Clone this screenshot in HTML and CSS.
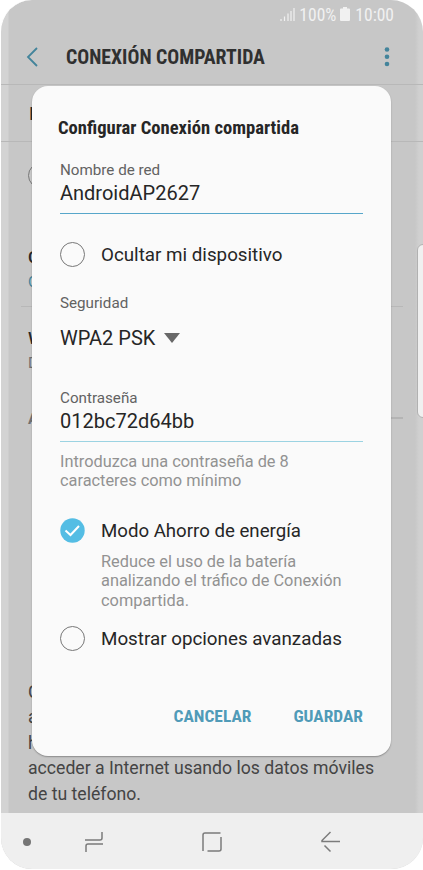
FILE: index.html
```html
<!DOCTYPE html>
<html lang="es">
<head>
<meta charset="utf-8">
<title>Conexión compartida</title>
<link rel="stylesheet" href="styles.css">
</head>
<body>
<div class="phone">
  <header class="status">
    <svg class="signal" width="15" height="15" viewBox="0 0 15 15"><path d="M1 14v-2M4.500 14V9.500M8 14V6.500M11 14V4M14 14V1"/></svg>
    <span class="battery-text">100%</span>
    <svg class="battery" width="10" height="14" viewBox="0 0 10 14"><path d="M3 0h4v1.500h2q1 0 1 1V13q0 1-1 1H1q-1 0-1-1V2.500q0-1 1-1h2z"/></svg>
    <span class="clock">10:00</span>
  </header>
  <div class="appbar">
    <svg class="back" width="12" height="20" viewBox="0 0 12 20"><path d="M11 1L2 10l9 9"/></svg>
    <h1 class="cond">CONEXIÓN COMPARTIDA</h1>
    <svg class="more" width="6" height="20" viewBox="0 0 6 20"><circle cx="3" cy="2.500" r="2.300"/><circle cx="3" cy="9.700" r="2.300"/><circle cx="3" cy="17" r="2.300"/></svg>
  </div>
  <main class="page">
    <div class="row switch">I</div>
    <div class="row device"><i class="radio"></i></div>
    <div class="row item"><b>C</b><span class="link">C</span></div>
    <div class="row item wifi"><b>W</b><span>D</span></div>
    <div class="section"><b>A</b><hr></div>
    <p class="help">C<br>a<br>h<br>acceder a Internet usando los datos móviles<br>de tu teléfono.</p>
  </main>
  <nav class="nav">
    <i class="dot"></i>
    <svg class="recents" width="20" height="22" viewBox="0 0 20 22"><path d="M1 9h15q2 0 2-2V1M19 13H4q-2 0-2 2v6"/></svg>
    <svg class="home" width="20" height="20" viewBox="0 0 20 20"><path d="M1 19V3q0-2 2-2h15.500M19 5v12q0 2-2 2H5.500"/></svg>
    <svg class="return" width="20" height="22" viewBox="0 0 20 22"><path d="M9.500 1L1 9.500v1h18M3.500 14.500l6 6"/></svg>
  </nav>
  <div class="edge-handle"></div>

  <section class="dialog">
    <h2 class="cond">Configurar Conexión compartida</h2>
    <label class="caption">Nombre de red</label>
    <div class="field"><span>AndroidAP2627</span></div>
    <div class="option hide"><i class="radio"></i><span>Ocultar mi dispositivo</span></div>
    <label class="caption security">Seguridad</label>
    <div class="select"><span>WPA2 PSK</span><svg width="16" height="10" viewBox="0 0 16 10"><path d="M0 0h16L8 10z"/></svg></div>
    <label class="caption">Contraseña</label>
    <div class="field password"><span>012bc72d64bb</span></div>
    <p class="hint">Introduzca una contraseña de 8<br>caracteres como mínimo</p>
    <div class="option saver"><svg width="25" height="25" viewBox="0 0 25 25"><circle cx="12.500" cy="12.500" r="12.200"/><path d="M5.500 12.500l5 4.500 8.500-9"/></svg><span>Modo Ahorro de energía</span></div>
    <p class="hint sub">Reduce el uso de la batería<br>analizando el tráfico de Conexión<br>compartida.</p>
    <div class="option advanced"><i class="radio"></i><span>Mostrar opciones avanzadas</span></div>
    <div class="actions cond"><span>CANCELAR</span><span>GUARDAR</span></div>
  </section>
</div>
</body>
</html>
```
FILE: styles.css
```css
* { box-sizing: border-box; }
body { margin: 0; background: #fff; font-family: Roboto, "Liberation Sans", sans-serif; color: #262626; }
h1, h2, p { margin: 0; }
svg { display: block; flex: none; fill: none; }
.cond { font-family: "Roboto Condensed", Roboto, sans-serif; font-stretch: 75%; font-weight: 700; }
.phone { position: relative; width: 423px; height: 870px; display: flex; flex-direction: column; overflow: hidden; border: solid #fff; border-width: 0 0 1px 1px; border-radius: 32px; background: linear-gradient(to right, #d3d3d3 0 7px, #c7c7c7 8px 414px, #d0d0d0 418px 422px); }
.status { height: 29px; display: flex; justify-content: flex-end; align-items: center; padding-right: 29px; color: #f1f1f1; font-size: 17.500px; line-height: 28px; font-stretch: 75%; }
.signal path { stroke: #f1f1f1; stroke-width: 1.2; }
.battery { margin: 0 5px 1px 4px; }
.battery path { fill: #f1f1f1; }
.battery-text { margin-left: 4px; }
.appbar { height: 56px; display: flex; align-items: center; padding: 0 33px 0 25px; border-bottom: 1px solid #b8b8b8; }
.back path { stroke: #43849b; stroke-width: 1.8; }
.appbar h1 { margin: 2px 0 0 28px; font-size: 19.800px; line-height: 28px; color: #303030; flex: 1; white-space: nowrap; }
.more circle { fill: #43849b; }
.page { flex: 1; padding: 0 20px 0 27px; font-size: 17px; }
.row { height: 57px; }
.switch { margin: 0 -20px 0 -27px; padding-left: 28px; line-height: 57px; font-size: 19px; font-weight: 500; border-bottom: 1px solid #b8b8b8; }
.device { height: 102px; padding-top: 21px; }
.item { height: 63px; display: flex; flex-direction: column; line-height: 27px; border-bottom: 1px solid #b8b8b8; margin-left: -7px; padding-left: 7px; }
.item b { font-weight: 500; }
.item span { font-size: 15px; line-height: 23px; color: #707070; }
.item .link { color: #43849b; }
.wifi { height: 102px; padding-top: 18px; border: 0; }
.section { display: flex; align-items: center; gap: 8px; height: 20px; font-size: 15px; color: #707070; }
.section hr { flex: 1; border: 0; height: 2px; background: #b4b4b4; margin: 0 0 2px; }
.help { margin-top: 250.500px; font-size: 17.650px; line-height: 25.600px; color: #444; white-space: nowrap; }
.nav { height: 56px; flex: none; background: #efefef; display: flex; align-items: center; padding: 2px 82px 0 22px; }
.nav path { stroke: #7b7b7b; stroke-width: 1.5; }
.dot { width: 8px; height: 8px; border-radius: 50%; background: #757575; }
.recents { margin-left: 53px; }
.home { margin-left: 98px; }
.return { margin-left: auto; }
.edge-handle { position: absolute; right: -9px; top: 244px; width: 15px; height: 174px; border: 1px solid #b1b1b1; border-radius: 6px; background: #f0f0f0; }

.dialog { position: absolute; left: 31px; top: 86px; width: 359px; height: 669.500px; padding: 30px 28px 0; border-radius: 16px; background: #fafafa; box-shadow: 0 1px 1.500px rgba(0,0,0,.3); white-space: nowrap; }
.dialog h2 { font-size: 18.600px; line-height: 24px; margin: 0 0 20px -2px; }
.caption { display: block; font-size: 15.200px; line-height: 20px; color: #626262; }
.field { height: 34px; font-size: 20px; line-height: 27px; border-bottom: 1px solid #57a6ca; }
.password { border-color: #9bd3e2; }
.option { display: flex; align-items: center; gap: 16px; height: 26px; font-size: 18.800px; }
.option span { padding-top: 1px; }
.radio { display: block; flex: none; width: 25px; height: 25px; border: 1.500px solid #777; border-radius: 50%; }
.hide { margin-top: 27px; }
.security { margin-top: 26px; }
.select { display: flex; align-items: center; gap: 9px; margin: 12px 0 37px; height: 26px; font-size: 20px; }
.select path { fill: #686868; }
.hint { margin-top: 9.500px; font-size: 16.350px; line-height: 19.500px; color: #929292; }
.saver { margin-top: 27px; font-size: 18.650px; }
.sub { margin: 8px 0 0 41px; }
.saver circle { fill: #54bde4; }
.saver path { stroke: #fff; stroke-width: 2; }
.advanced { margin-top: 15.500px; }
.actions { display: flex; justify-content: flex-end; gap: 42px; margin-top: 52.500px; font-size: 17.400px; line-height: 24px; color: #509bb8; }
```
